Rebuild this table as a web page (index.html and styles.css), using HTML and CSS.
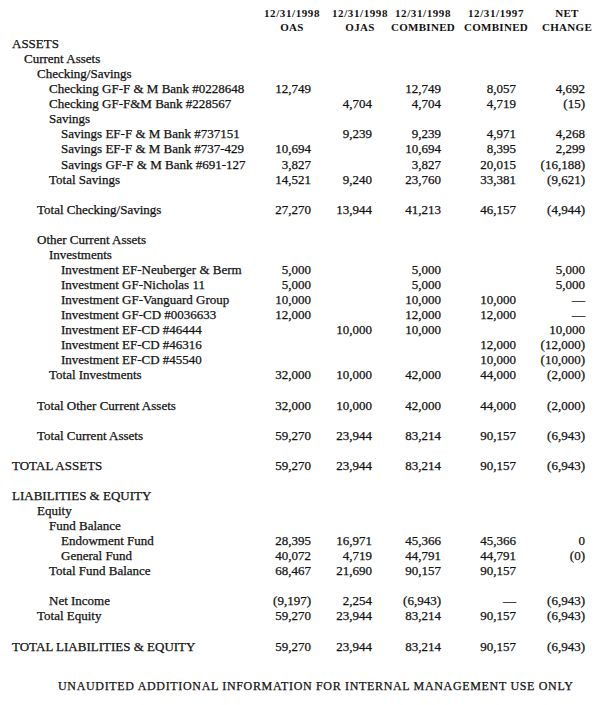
FILE: index.html
```html
<!DOCTYPE html>
<html>
<head>
<meta charset="utf-8">
<link rel="stylesheet" href="styles.css">
</head>
<body>
<div class="page">
  <div class="head">
    <div class="hspace"></div>
    <div class="hcol"><span class="date">12/31/1998</span><span>OAS</span></div>
    <div class="hcol"><span class="date">12/31/1998</span><span>OJAS</span></div>
    <div class="hcol"><span class="date">12/31/1998</span><span>COMBINED</span></div>
    <div class="hcol"><span class="date">12/31/1997</span><span>COMBINED</span></div>
    <div class="hcol"><span>NET</span><span>CHANGE</span></div>
  </div>
  <div class="body">
    <div class="row"><span class="lbl l0">ASSETS</span><span class="n"></span><span class="n"></span><span class="n"></span><span class="n"></span><span class="n"></span></div>
    <div class="row"><span class="lbl l1">Current Assets</span><span class="n"></span><span class="n"></span><span class="n"></span><span class="n"></span><span class="n"></span></div>
    <div class="row"><span class="lbl l2">Checking/Savings</span><span class="n"></span><span class="n"></span><span class="n"></span><span class="n"></span><span class="n"></span></div>
    <div class="row"><span class="lbl l3">Checking GF-F &amp; M Bank #0228648</span><span class="n">12,749</span><span class="n"></span><span class="n">12,749</span><span class="n">8,057</span><span class="n">4,692</span></div>
    <div class="row"><span class="lbl l3">Checking GF-F&amp;M Bank #228567</span><span class="n"></span><span class="n">4,704</span><span class="n">4,704</span><span class="n">4,719</span><span class="n">(15)</span></div>
    <div class="row"><span class="lbl l3">Savings</span><span class="n"></span><span class="n"></span><span class="n"></span><span class="n"></span><span class="n"></span></div>
    <div class="row"><span class="lbl l4">Savings EF-F &amp; M Bank #737151</span><span class="n"></span><span class="n">9,239</span><span class="n">9,239</span><span class="n">4,971</span><span class="n">4,268</span></div>
    <div class="row"><span class="lbl l4">Savings EF-F &amp; M Bank #737-429</span><span class="n">10,694</span><span class="n"></span><span class="n">10,694</span><span class="n">8,395</span><span class="n">2,299</span></div>
    <div class="row"><span class="lbl l4">Savings GF-F &amp; M Bank #691-127</span><span class="n">3,827</span><span class="n"></span><span class="n">3,827</span><span class="n">20,015</span><span class="n">(16,188)</span></div>
    <div class="row"><span class="lbl l3">Total Savings</span><span class="n">14,521</span><span class="n">9,240</span><span class="n">23,760</span><span class="n">33,381</span><span class="n">(9,621)</span></div>
    <div class="blank"></div>
    <div class="row"><span class="lbl l2">Total Checking/Savings</span><span class="n">27,270</span><span class="n">13,944</span><span class="n">41,213</span><span class="n">46,157</span><span class="n">(4,944)</span></div>
    <div class="blank"></div>
    <div class="row"><span class="lbl l2">Other Current Assets</span><span class="n"></span><span class="n"></span><span class="n"></span><span class="n"></span><span class="n"></span></div>
    <div class="row"><span class="lbl l3">Investments</span><span class="n"></span><span class="n"></span><span class="n"></span><span class="n"></span><span class="n"></span></div>
    <div class="row"><span class="lbl l4">Investment EF-Neuberger &amp; Berm</span><span class="n">5,000</span><span class="n"></span><span class="n">5,000</span><span class="n"></span><span class="n">5,000</span></div>
    <div class="row"><span class="lbl l4">Investment GF-Nicholas 11</span><span class="n">5,000</span><span class="n"></span><span class="n">5,000</span><span class="n"></span><span class="n">5,000</span></div>
    <div class="row"><span class="lbl l4">Investment GF-Vanguard Group</span><span class="n">10,000</span><span class="n"></span><span class="n">10,000</span><span class="n">10,000</span><span class="n">—</span></div>
    <div class="row"><span class="lbl l4">Investment GF-CD #0036633</span><span class="n">12,000</span><span class="n"></span><span class="n">12,000</span><span class="n">12,000</span><span class="n">—</span></div>
    <div class="row"><span class="lbl l4">Investment EF-CD #46444</span><span class="n"></span><span class="n">10,000</span><span class="n">10,000</span><span class="n"></span><span class="n">10,000</span></div>
    <div class="row"><span class="lbl l4">Investment EF-CD #46316</span><span class="n"></span><span class="n"></span><span class="n"></span><span class="n">12,000</span><span class="n">(12,000)</span></div>
    <div class="row"><span class="lbl l4">Investment EF-CD #45540</span><span class="n"></span><span class="n"></span><span class="n"></span><span class="n">10,000</span><span class="n">(10,000)</span></div>
    <div class="row"><span class="lbl l3">Total Investments</span><span class="n">32,000</span><span class="n">10,000</span><span class="n">42,000</span><span class="n">44,000</span><span class="n">(2,000)</span></div>
    <div class="blank"></div>
    <div class="row"><span class="lbl l2">Total Other Current Assets</span><span class="n">32,000</span><span class="n">10,000</span><span class="n">42,000</span><span class="n">44,000</span><span class="n">(2,000)</span></div>
    <div class="blank"></div>
    <div class="row"><span class="lbl l2">Total Current Assets</span><span class="n">59,270</span><span class="n">23,944</span><span class="n">83,214</span><span class="n">90,157</span><span class="n">(6,943)</span></div>
    <div class="blank"></div>
    <div class="row"><span class="lbl l0">TOTAL ASSETS</span><span class="n">59,270</span><span class="n">23,944</span><span class="n">83,214</span><span class="n">90,157</span><span class="n">(6,943)</span></div>
    <div class="blank"></div>
    <div class="row"><span class="lbl l0">LIABILITIES &amp; EQUITY</span><span class="n"></span><span class="n"></span><span class="n"></span><span class="n"></span><span class="n"></span></div>
    <div class="row"><span class="lbl l2">Equity</span><span class="n"></span><span class="n"></span><span class="n"></span><span class="n"></span><span class="n"></span></div>
    <div class="row"><span class="lbl l3">Fund Balance</span><span class="n"></span><span class="n"></span><span class="n"></span><span class="n"></span><span class="n"></span></div>
    <div class="row"><span class="lbl l4">Endowment Fund</span><span class="n">28,395</span><span class="n">16,971</span><span class="n">45,366</span><span class="n">45,366</span><span class="n">0</span></div>
    <div class="row"><span class="lbl l4">General Fund</span><span class="n">40,072</span><span class="n">4,719</span><span class="n">44,791</span><span class="n">44,791</span><span class="n">(0)</span></div>
    <div class="row"><span class="lbl l3">Total Fund Balance</span><span class="n">68,467</span><span class="n">21,690</span><span class="n">90,157</span><span class="n">90,157</span><span class="n"></span></div>
    <div class="blank"></div>
    <div class="row"><span class="lbl l3">Net Income</span><span class="n">(9,197)</span><span class="n">2,254</span><span class="n">(6,943)</span><span class="n">—</span><span class="n">(6,943)</span></div>
    <div class="row"><span class="lbl l2">Total Equity</span><span class="n">59,270</span><span class="n">23,944</span><span class="n">83,214</span><span class="n">90,157</span><span class="n">(6,943)</span></div>
    <div class="blank"></div>
    <div class="row"><span class="lbl l0">TOTAL LIABILITIES &amp; EQUITY</span><span class="n">59,270</span><span class="n">23,944</span><span class="n">83,214</span><span class="n">90,157</span><span class="n">(6,943)</span></div>
  </div>
  <div class="foot">UNAUDITED ADDITIONAL INFORMATION FOR INTERNAL MANAGEMENT USE ONLY</div>
</div>
</body>
</html>
```
FILE: styles.css
```css
html, body {
  margin: 0;
  padding: 0;
  background: #ffffff;
}
body {
  font-family: "Liberation Serif", "Times New Roman", serif;
  color: #111111;
  -webkit-text-stroke: 0.25px #111111;
}
.page {
  width: 600px;
  padding-top: 7px;
}
.head {
  display: grid;
  grid-template-columns: 258px 68px 68px 58px 88px 54px;
  font-size: 11px;
  font-weight: bold;
  line-height: 13.5px;
  height: 27px;
  -webkit-text-stroke: 0;
}
.hcol {
  display: flex;
  flex-direction: column;
  align-items: center;
  white-space: nowrap;
}
.hcol span {
  letter-spacing: 0.3px;
}
.hcol .date {
  letter-spacing: 0.6px;
}
.body {
  margin-top: 2px;
  font-size: 13px;
  line-height: 15.07px;
}
.row {
  display: grid;
  grid-template-columns: 260px 51px 61px 69px 75px 69px;
  height: 15.07px;
  white-space: nowrap;
}
.blank {
  height: 15.07px;
}
.lbl {
  letter-spacing: 0;
}
.l0 { padding-left: 12px; }
.l1 { padding-left: 24px; }
.l2 { padding-left: 37px; }
.l3 { padding-left: 49px; }
.l4 { padding-left: 61px; }
.n {
  text-align: right;
}
.foot {
  margin-top: 25px;
  padding-left: 58px;
  font-size: 12px;
  line-height: 14px;
  letter-spacing: 0.67px;
  white-space: nowrap;
}
```
